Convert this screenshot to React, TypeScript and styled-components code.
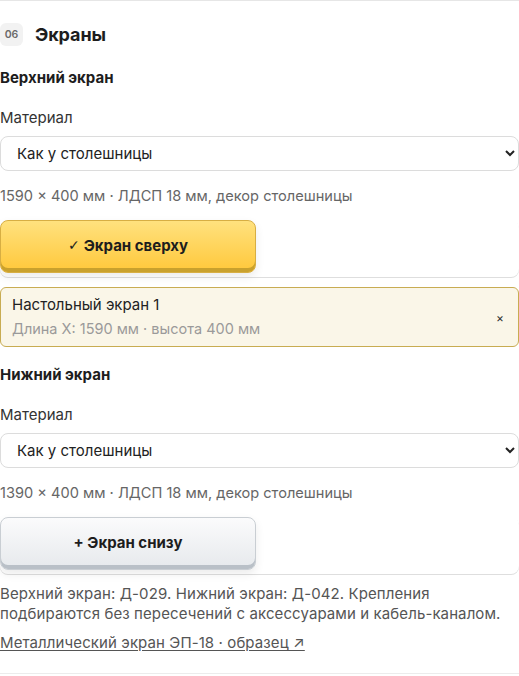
import React from "react";
import styled, { createGlobalStyle } from "styled-components";

const GlobalStyle = createGlobalStyle`
  html, body {
    margin: 0;
    padding: 0;
    background: #ffffff;
  }
  body {
    font-family: Inter, "Noto Sans", "Liberation Sans", sans-serif;
    color: #222;
    -webkit-font-smoothing: antialiased;
  }
`;

const Section = styled.section`
  border-top: 1px solid #e6e6e6;
  border-bottom: 1px solid #ececec;
  padding: 22px 0 20px;
  display: flex;
  flex-direction: column;
`;

const Header = styled.div`
  display: flex;
  align-items: center;
  gap: 12px;
  margin-bottom: 22px;
`;

const StepBadge = styled.span`
  width: 23px;
  height: 23px;
  border-radius: 6px;
  background: #f2f2f2;
  color: #6b6b6b;
  font-size: 10.5px;
  font-weight: 600;
  display: flex;
  align-items: center;
  justify-content: center;
`;

const Title = styled.h2`
  margin: 0;
  font-size: 18px;
  font-weight: 700;
  color: #1d1d1d;
  letter-spacing: -0.1px;
`;

const Group = styled.div`
  display: flex;
  flex-direction: column;
`;

const GroupTitle = styled.h3`
  margin: 0 0 20px;
  font-size: 15px;
  font-weight: 700;
  line-height: 20px;
  color: #1d1d1d;
`;

const FieldLabel = styled.label`
  font-size: 15px;
  line-height: 20px;
  color: #333;
  margin-bottom: 8px;
`;

const Select = styled.select`
  width: 100%;
  height: 35px;
  border: 1px solid #dcdcdc;
  border-radius: 8px;
  background: #fff;
  padding: 0 10px 0 12px;
  font-family: inherit;
  font-size: 15px;
  color: #222;
`;

const Hint = styled.p`
  margin: 15px 0 14px;
  font-size: 14.6px;
  line-height: 20px;
  color: #666;
`;

const ButtonTray = styled.div`
  border-radius: 8px;
  box-shadow: 0 1px 0 #dedede;
  padding-bottom: 4px;
  margin-bottom: 10px;
`;

const ActionButton = styled.button<{ $tone: "gold" | "plain" }>`
  display: flex;
  align-items: center;
  justify-content: center;
  gap: 4px;
  width: 256px;
  height: 53px;
  border-radius: 8px;
  font-family: inherit;
  font-size: 15px;
  font-weight: 700;
  color: #1d1d1d;
  cursor: pointer;
  padding: 0 0 3px;
  border: 1px solid ${(p) => (p.$tone === "gold" ? "#d7ae43" : "#c9ced3")};
  background: ${(p) =>
    p.$tone === "gold"
      ? "linear-gradient(180deg, #ffe17e 0%, #ffc83a 100%)"
      : "linear-gradient(180deg, #fbfbfc 0%, #e6e9ec 100%)"};
  box-shadow: inset 0 -4px 0
      ${(p) => (p.$tone === "gold" ? "#c9a12d" : "#b9c0c7")},
    0 4px 10px rgba(0, 0, 0, 0.08);
`;

const Check = styled.span`
  font-family: "DejaVu Sans", sans-serif;
  font-weight: 400;
  font-size: 14px;
`;

const ScreenCard = styled.div`
  display: flex;
  align-items: center;
  justify-content: space-between;
  background: #faf6e8;
  border: 1px solid #c8ac52;
  border-radius: 6px;
  padding: 5px 14px 5px 11px;
  margin-bottom: 18px;
`;

const CardText = styled.div`
  display: flex;
  flex-direction: column;
`;

const CardName = styled.span`
  font-size: 15px;
  line-height: 24px;
  color: #222;
`;

const CardMeta = styled.span`
  font-size: 14.5px;
  line-height: 24px;
  color: #9a9a9a;
`;

const RemoveButton = styled.button`
  border: none;
  background: none;
  padding: 0;
  font-family: inherit;
  font-size: 12px;
  color: #333;
  cursor: pointer;
`;

const Note = styled.p`
  margin: 0 0 9px;
  max-width: 505px;
  font-size: 15px;
  letter-spacing: 0.1px;
  line-height: 20px;
  color: #555;
`;

const SampleLink = styled.a`
  font-size: 15px;
  letter-spacing: 0.1px;
  line-height: 20px;
  color: #555;
  text-decoration: underline;
  text-underline-offset: 2px;
  align-self: flex-start;
`;

export default function App() {
  return (
    <>
      <GlobalStyle />
      <Section>
        <Header>
          <StepBadge>06</StepBadge>
          <Title>Экраны</Title>
        </Header>

        <Group>
          <GroupTitle>Верхний экран</GroupTitle>
          <FieldLabel>Материал</FieldLabel>
          <Select defaultValue="top">
            <option value="top">Как у столешницы</option>
          </Select>
          <Hint>1590 × 400 мм · ЛДСП 18 мм, декор столешницы</Hint>
          <ButtonTray>
            <ActionButton $tone="gold">
              <Check>✓</Check>
              Экран сверху
            </ActionButton>
          </ButtonTray>
          <ScreenCard>
            <CardText>
              <CardName>Настольный экран 1</CardName>
              <CardMeta>Длина X: 1590 мм · высота 400 мм</CardMeta>
            </CardText>
            <RemoveButton aria-label="Удалить">×</RemoveButton>
          </ScreenCard>
        </Group>

        <Group>
          <GroupTitle>Нижний экран</GroupTitle>
          <FieldLabel>Материал</FieldLabel>
          <Select defaultValue="bottom">
            <option value="bottom">Как у столешницы</option>
          </Select>
          <Hint>1390 × 400 мм · ЛДСП 18 мм, декор столешницы</Hint>
          <ButtonTray>
            <ActionButton $tone="plain">+ Экран снизу</ActionButton>
          </ButtonTray>
        </Group>

        <Note>
          Верхний экран: Д-029. Нижний экран: Д-042. Крепления подбираются без
          пересечений с аксессуарами и кабель-каналом.
        </Note>
        <SampleLink href="#">Металлический экран ЭП-18 · образец ↗</SampleLink>
      </Section>
    </>
  );
}
